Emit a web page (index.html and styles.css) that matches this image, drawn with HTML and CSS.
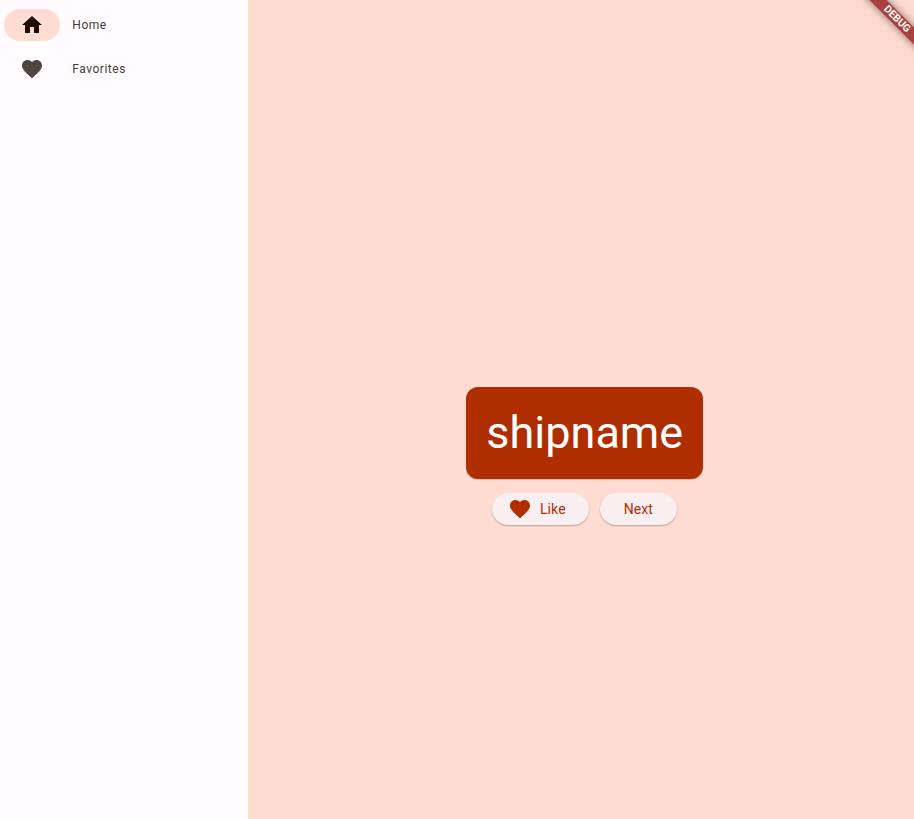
FILE: index.html
```html
<!DOCTYPE html>
<html lang="en">
<head>
<meta charset="utf-8">
<title>Namer App</title>
<link rel="stylesheet" href="styles.css">
</head>
<body>
<nav class="rail">
  <a class="dest selected"><span class="indicator"><svg class="icon" viewBox="0 0 24 24"><path d="M10 20v-6h4v6h5v-8h3L12 3 2 12h3v8z"/></svg></span><span class="label">Home</span></a>
  <a class="dest"><span class="indicator"><svg class="icon" viewBox="0 0 24 24"><path d="M12 21.35l-1.45-1.32C5.4 15.36 2 12.28 2 8.5 2 5.42 4.42 3 7.5 3c1.74 0 3.41.81 4.5 2.09C13.09 3.81 14.76 3 16.5 3 19.58 3 22 5.42 22 8.5c0 3.78-3.4 6.86-8.55 11.54L12 21.35z"/></svg></span><span class="label">Favorites</span></a>
</nav>
<main class="page">
  <div class="card">shipname</div>
  <div class="actions">
    <button class="btn like"><svg class="icon" viewBox="0 0 24 24"><path d="M12 21.35l-1.45-1.32C5.4 15.36 2 12.28 2 8.5 2 5.42 4.42 3 7.5 3c1.74 0 3.41.81 4.5 2.09C13.09 3.81 14.76 3 16.5 3 19.58 3 22 5.42 22 8.5c0 3.78-3.4 6.86-8.55 11.54L12 21.35z"/></svg><span>Like</span></button>
    <button class="btn">Next</button>
  </div>
</main>
<div class="corner"><div class="banner">DEBUG</div></div>
</body>
</html>
```
FILE: styles.css
```css
* { box-sizing: border-box; }
body {
  margin: 0;
  height: 100vh;
  display: flex;
  overflow: hidden;
  font-family: Roboto, sans-serif;
}
.rail {
  width: 248px;
  background: #fffbff;
  padding-top: 3px;
  flex: none;
}
.dest {
  display: flex;
  align-items: center;
  height: 44px;
  padding-left: 4px;
  color: #53433f;
}
.indicator {
  width: 56px;
  height: 32px;
  border-radius: 16px;
  display: flex;
  align-items: center;
  justify-content: center;
}
.selected .indicator { background: #ffdbd1; color: #200c06; }
.icon { width: 24px; height: 24px; fill: currentColor; display: block; }
.label {
  margin-left: 12.3px;
  font-size: 12px;
  line-height: 16px;
  letter-spacing: 0.52px;
  color: #453b38;
}
.page {
  flex: 1;
  background: #ffdbd1;
  display: flex;
  flex-direction: column;
  align-items: center;
  padding: 387px 0 0 7px;
}
.card {
  width: 237px;
  height: 92px;
  border-radius: 12px;
  background: #ae2e00;
  color: #fff;
  font-size: 45px;
  line-height: 92px;
  text-align: center;
  text-indent: 0.5px;
  box-shadow: 0 1px 1px rgba(0, 0, 0, 0.15);
}
.actions { display: flex; gap: 10.5px; margin-top: 14px; }
.btn {
  height: 32px;
  border: 0;
  border-radius: 16px;
  padding: 0 24px;
  background: #f9eff0;
  color: #ae2e00;
  font: 400 14px/20px Roboto, sans-serif;
  letter-spacing: 0.1px;
  display: flex;
  align-items: center;
  gap: 8px;
  box-shadow: 0 1px 1.5px rgba(0, 0, 0, 0.28);
}
.like { padding: 0 23.5px 0 16px; }
.corner {
  position: absolute;
  top: 0;
  right: 0;
  width: 70px;
  height: 70px;
  overflow: hidden;
}
.banner {
  position: absolute;
  width: 100px;
  height: 12px;
  left: 3px;
  top: 12.5px;
  transform: rotate(45deg);
  background: #a9403d;
  color: #fff;
  font-size: 10.4px;
  line-height: 12px;
  font-weight: 700;
  text-align: center;
  box-shadow: 0 0 9px rgba(0, 0, 0, 0.5);
}
```
